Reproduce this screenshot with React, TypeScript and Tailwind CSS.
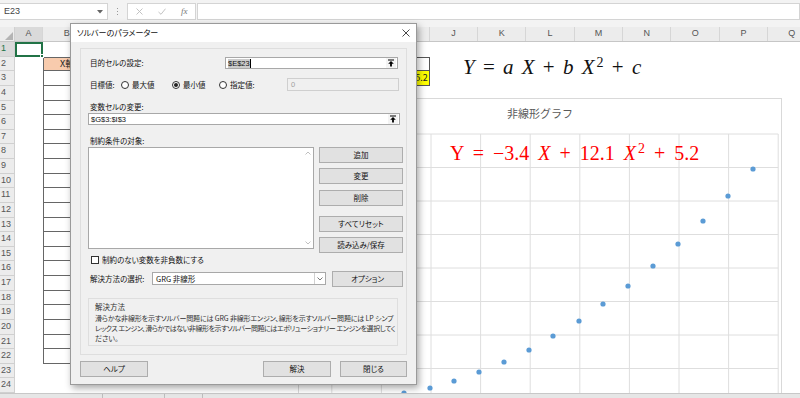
import React from "react";

const COLS = ["A", "B", "C", "D", "E", "F", "G", "H", "I", "J", "K", "L", "M", "N", "O", "P", "Q"];
const ROWS = Array.from({ length: 24 }, (_, i) => i + 1);

// scatter points in page coordinates
const POINTS: [number, number][] = [
  [403, 392], [429, 387], [453, 380], [478, 371], [503, 361], [528, 349], [552, 335], [578, 320],
  [602, 303], [627, 285], [652, 265], [677, 243], [702, 220], [727, 195], [752, 168],
];

const UploadIcon = () => (
  <svg width="8" height="8" viewBox="0 0 8 8">
    <path d="M1 1h6" stroke="#000" strokeWidth="1" />
    <path d="M4 2 L1.2 4.8 H3.1 V7.5 H4.9 V4.8 H6.8 Z" fill="#000" />
  </svg>
);

const RefInput = ({ value, className, selected }: { value: string; className: string; selected?: boolean }) => (
  <div className={`h-[12px] bg-white border border-[#a8a8a8] flex items-center shrink-0 ${className}`}>
    <div className="flex-1 pl-[2px] flex items-center">
      <span className={`text-[7.5px] leading-[9px] font-['Liberation_Sans',sans-serif] ${selected ? "bg-[#cccccc]" : ""}`}>
        {value}
      </span>
      {selected && <span className="w-px h-[9px] bg-black" />}
    </div>
    <div className="w-[10px] h-[10px] mr-px bg-[#f4f4f4] flex items-center justify-center">
      <UploadIcon />
    </div>
  </div>
);

const Radio = ({ label, checked, className }: { label: string; checked?: boolean; className: string }) => (
  <div className={`flex items-center gap-[3px] shrink-0 ${className}`}>
    <span className="w-[8px] h-[8px] rounded-full border border-[#333] bg-white flex items-center justify-center">
      {checked && <span className="w-[4px] h-[4px] rounded-full bg-[#222]" />}
    </span>
    <span>{label}</span>
  </div>
);

const Btn = ({ label, className }: { label: string; className: string }) => (
  <div className={`h-[16px] bg-[#e1e1e1] border border-[#adadad] flex items-center justify-center shrink-0 ${className}`}>
    {label}
  </div>
);

const Cell = ({ col, row }: { col: string; row: number }) => {
  const w = col === "A" ? "w-[28px]" : "w-[48.35px]";
  if (col === "A" && row === 1) {
    return (
      <div className={`${w} shrink-0 h-full relative border-2 border-[#217346]`}>
        <span className="absolute -right-[3px] -bottom-[3px] w-[4px] h-[4px] bg-[#217346] border border-white" />
      </div>
    );
  }
  if (col === "B" && row >= 2 && row <= 22) {
    return (
      <div
        className={`${w} shrink-0 h-full border-l border-r border-b border-[#666] flex items-center justify-center text-[9px] ${
          row === 2 ? "border-t bg-[#f8cbad]" : ""
        }`}
      >
        {row === 2 ? "X軸" : ""}
      </div>
    );
  }
  if ((col === "G" || col === "H" || col === "I") && (row === 2 || row === 3)) {
    const label = row === 2 ? { G: "a", H: "b", I: "c" }[col] : { G: "-3.4", H: "12.1", I: "5.2" }[col];
    return (
      <div
        className={`${w} shrink-0 h-full border-r border-b border-[#555] flex items-center text-[9px] px-px ${
          row === 2 ? "border-t bg-white justify-center" : "bg-[#ffff00] justify-end"
        } ${col === "G" ? "border-l" : ""}`}
      >
        {label}
      </div>
    );
  }
  return <div className={`${w} shrink-0 h-full`} />;
};

const Chart = () => {
  const vx = [330.8, 380.4, 430, 479.6, 529.2, 578.8, 628.4, 678, 727.6, 777.2];
  const hy = [133, 166.5, 200, 233.5, 267, 300.5, 334, 367.5, 401];
  return (
    <div className="absolute left-[298px] top-[56px] w-[484px] h-[300px] bg-white border border-[#d9d9d9]">
      <svg className="absolute left-0 top-0" width="484" height="300" viewBox="298 98 484 300">
        {vx.map((x) => (
          <line key={x} x1={x} y1={133} x2={x} y2={401} stroke="#dedede" strokeWidth="1" />
        ))}
        {hy.map((y) => (
          <line key={y} x1={330.8} y1={y} x2={777.2} y2={y} stroke="#dedede" strokeWidth="1" />
        ))}
        {POINTS.map(([x, y]) => (
          <circle key={x} cx={x} cy={y} r="2.6" fill="#5b9bd5" />
        ))}
      </svg>
      <div className="relative pt-[7px] text-center text-[11px] leading-[15px] text-[#595959] font-['Noto_Sans_CJK_JP',sans-serif]">
        非線形グラフ
      </div>
      <div className="absolute left-[151px] top-[42px] text-[20px] leading-[24px] text-[#ff0000] whitespace-nowrap [word-spacing:4px] font-['Liberation_Serif',serif]">
        Y = −3.4 <i>X</i> + 12.1 <i>X</i>
        <sup className="text-[14px] ml-[2px]">2</sup> + 5.2
      </div>
    </div>
  );
};

const Dialog = () => (
  <div className="absolute left-[70px] top-[23px] w-[347px] h-[362px] flex flex-col border border-[#9a9a9a] bg-[#f0f0f0] shadow-[2px_3px_7px_rgba(0,0,0,0.35)] text-[7.5px] text-[#111] font-['Noto_Sans_CJK_JP',sans-serif] [font-feature-settings:'palt']">
    <div className="h-[18px] bg-white flex items-center justify-between pl-[6px] pr-[6px]">
      <span className="text-[8px]">ソルバーのパラメーター</span>
      <svg width="8" height="8" viewBox="0 0 8 8">
        <path d="M0.5 0.5 L7.5 7.5 M7.5 0.5 L0.5 7.5" stroke="#333" strokeWidth="0.9" />
      </svg>
    </div>
    <div className="flex-1 flex flex-col px-[9px] pt-[6px]">
      <div className="w-[327px] h-[307px] border border-[#dedede] flex flex-col pl-[7px] pr-[6px]">
        {/* 目的セル */}
        <div className="mt-[8px] h-[12px] flex items-center">
          <span className="pl-[2px] w-[137px] shrink-0">目的セルの設定:</span>
          <RefInput value="$E$23" className="w-[173px]" selected />
        </div>
        {/* 目標値 */}
        <div className="mt-[9px] h-[13px] flex items-center">
          <span className="pl-[2px] w-[33px] shrink-0">目標値:</span>
          <Radio label="最大値" className="w-[51px]" />
          <Radio label="最小値" checked className="w-[47px]" />
          <Radio label="指定値:" className="w-[68px]" />
          <div className="w-[112px] h-[13px] border border-[#cfcfcf] bg-[#f0f0f0] flex items-center pl-[3px] text-[#a0a0a0] font-['Liberation_Sans',sans-serif]">
            0
          </div>
        </div>
        <div className="mt-[10px] h-[11px] pl-[2px] flex items-center">変数セルの変更:</div>
        <RefInput value="$G$3:$I$3" className="mt-px w-[312px]" />
        <div className="mt-[10px] h-[11px] pl-[2px] flex items-center">制約条件の対象:</div>
        {/* list + buttons */}
        <div className="mt-px flex gap-[5px] h-[106px]">
          <div className="w-[226px] h-[102px] bg-white border border-[#a8a8a8] flex justify-end shrink-0">
            <div className="w-[10px] flex flex-col items-center justify-between py-[3px]">
              <svg width="6" height="4" viewBox="0 0 6 4">
                <path d="M0.5 3.5 L3 1 L5.5 3.5" stroke="#b0b0b0" fill="none" strokeWidth="0.8" />
              </svg>
              <svg width="6" height="4" viewBox="0 0 6 4">
                <path d="M0.5 0.5 L3 3 L5.5 0.5" stroke="#b0b0b0" fill="none" strokeWidth="0.8" />
              </svg>
            </div>
          </div>
          <div className="w-[84px] flex flex-col shrink-0">
            <Btn label="追加" className="w-[84px]" />
            <Btn label="変更" className="w-[84px] mt-[5px]" />
            <Btn label="削除" className="w-[84px] mt-[6px]" />
            <Btn label="すべてリセット" className="w-[84px] mt-[10px]" />
            <Btn label="読み込み/保存" className="w-[84px] mt-[5px]" />
          </div>
        </div>
        {/* checkbox */}
        <div className="mt-[2px] h-[9px] flex items-center gap-[3px] pl-[3px]">
          <span className="w-[8px] h-[8px] border border-[#333] bg-white shrink-0" />
          <span>制約のない変数を非負数にする</span>
        </div>
        {/* method select */}
        <div className="mt-[7px] h-[15px] flex items-center">
          <span className="pl-[2px] w-[64px] shrink-0">解決方法の選択:</span>
          <div className="w-[174px] h-[13px] bg-white border border-[#a8a8a8] flex items-center shrink-0">
            <span className="flex-1 pl-[3px]">GRG 非線形</span>
            <div className="w-[11px] h-full border-l border-[#d0d0d0] flex items-center justify-center">
              <svg width="6" height="4" viewBox="0 0 6 4">
                <path d="M0.5 0.5 L3 3 L5.5 0.5" stroke="#555" fill="none" strokeWidth="0.8" />
              </svg>
            </div>
          </div>
          <Btn label="オプション" className="w-[71px] h-[15px] ml-[6px]" />
        </div>
        {/* description */}
        <div className="mt-[12px] w-[310px] h-[48px] border border-[#dedede] pl-[6px] pt-[2px] flex flex-col">
          <div className="text-[7.5px] leading-[11px] text-[#333]">解決方法</div>
          <div className="mt-px flex flex-col text-[7px] leading-[10px] text-[#333] whitespace-nowrap">
            <span className="tracking-[-0.15px]">
              滑らかな非線形を示すソルバー問題には GRG 非線形エンジン、線形を示すソルバー問題には LP シンプ
            </span>
            <span className="tracking-[-0.45px]">
              レックス エンジン、滑らかではない非線形を示すソルバー問題にはエボリューショナリー エンジンを選択してく
            </span>
            <span>ださい。</span>
          </div>
        </div>
      </div>
      <div className="mt-[6px] flex">
        <Btn label="ヘルプ" className="w-[68px]" />
        <Btn label="解決" className="w-[68px] ml-auto border-[#0078d7]" />
        <Btn label="閉じる" className="w-[67px] ml-[9px]" />
      </div>
    </div>
  </div>
);

const App: React.FC = () => {
  return (
    <div className="relative w-[800px] h-[398px] overflow-hidden bg-white flex flex-col font-['Noto_Sans_CJK_JP',sans-serif] text-[#222]">
      {/* formula bar */}
      <div className="h-[27px] bg-[#f3f3f3] flex items-start pt-[3px] shrink-0">
        <div className="w-[108px] h-[17px] bg-white border border-[#d4d4d4] border-l-0 flex items-center justify-between px-[4px]">
          <span className="text-[9px] text-[#444] font-['Liberation_Sans',sans-serif]">E23</span>
          <svg width="6" height="4" viewBox="0 0 6 4">
            <path d="M0 0 H6 L3 3.5 Z" fill="#666" />
          </svg>
        </div>
        <div className="w-[19px] h-[17px] flex flex-col items-center justify-center gap-[2px]">
          <span className="w-px h-px bg-[#999]" />
          <span className="w-px h-px bg-[#999]" />
          <span className="w-px h-px bg-[#999]" />
        </div>
        <div className="w-[69px] h-[17px] bg-white border border-[#d4d4d4] flex items-center justify-around">
          <svg width="7" height="7" viewBox="0 0 7 7">
            <path d="M0.5 0.5 L6.5 6.5 M6.5 0.5 L0.5 6.5" stroke="#bcbcbc" strokeWidth="0.9" />
          </svg>
          <svg width="8" height="7" viewBox="0 0 8 7">
            <path d="M0.5 4 L3 6.3 L7.5 0.7" stroke="#bcbcbc" fill="none" strokeWidth="0.9" />
          </svg>
          <span className="text-[9px] italic text-[#777] font-['Liberation_Serif',serif]">fx</span>
        </div>
        <div className="flex-1 h-[17px] bg-white border border-[#d4d4d4] ml-px" />
      </div>
      {/* column headers */}
      <div className="h-[15px] flex shrink-0 bg-[#ececec] border-b border-[#c6c6c6] text-[9px] text-[#555] font-['Liberation_Sans',sans-serif]">
        <div className="w-[15px] shrink-0 border-r border-[#d0d0d0] flex items-end justify-end p-px">
          <svg width="8" height="8" viewBox="0 0 8 8">
            <path d="M8 0 V8 H0 Z" fill="#b4b4b4" />
          </svg>
        </div>
        {COLS.map((c) => (
          <div
            key={c}
            className={`${c === "A" ? "w-[28px] bg-[#dadada]" : "w-[48.35px]"} shrink-0 border-r border-[#d6d6d6] flex items-center justify-center`}
          >
            {c}
          </div>
        ))}
      </div>
      {/* sheet */}
      <div className="relative flex-1 flex flex-col overflow-hidden">
        {ROWS.map((r) => (
          <div key={r} className="h-[14.625px] flex shrink-0">
            <div
              className={`w-[15px] shrink-0 border-r border-b border-[#d0d0d0] flex items-center text-[9px] font-['Liberation_Sans',sans-serif] ${
                r === 1 ? "bg-[#dadada] text-[#217346]" : "bg-[#ececec] text-[#555]"
              }`}
            >
              <span className="pl-px">{r}</span>
            </div>
            {COLS.map((c) => (
              <Cell key={c} col={c} row={r} />
            ))}
          </div>
        ))}
        {/* equation text box */}
        <div className="absolute left-[463px] top-[13px] text-[21px] leading-[24px] whitespace-nowrap [word-spacing:3px] text-[#111] font-['Liberation_Serif',serif]">
          <i>Y</i> = <i>a X</i> + <i>b X</i>
          <sup className="text-[14px] ml-[2px]">2</sup> + <i>c</i>
        </div>
        <Chart />
      </div>
      {/* sheet tabs strip */}
      <div className="h-[5px] shrink-0 bg-[#e6e6e6] border-t border-[#c8c8c8] flex">
        <div className="w-[103px] border-r border-[#bdbdbd]" />
        <div className="w-[62px] border-r border-[#bdbdbd]" />
        <div className="w-[38px] border-r border-[#bdbdbd]" />
      </div>
      <Dialog />
    </div>
  );
};

export default App;
